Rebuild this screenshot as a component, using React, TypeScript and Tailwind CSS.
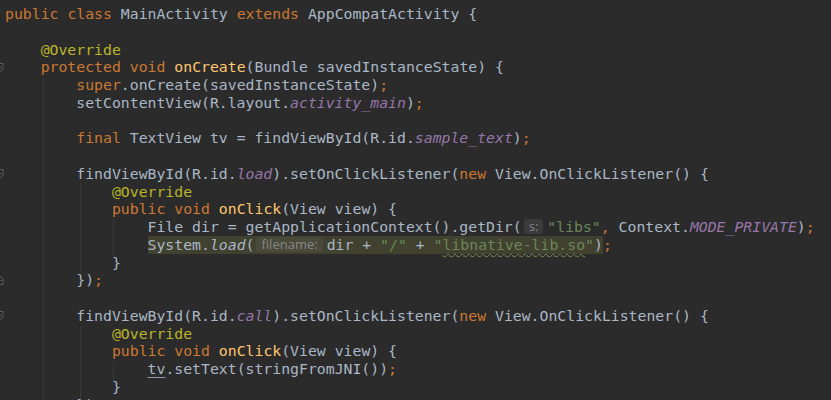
import React from 'react';

type Kind = 't' | 'k' | 'a' | 'm' | 'f' | 'i' | 's' | 'h' | 'u' | 'w';
type Tok = [Kind, string];

const kindClass: Record<Kind, string> = {
  t: 'text-[#a9b7c6]',
  k: 'text-[#cc7832]',
  a: 'text-[#bbb529]',
  m: 'text-[#ffc66d]',
  f: 'text-[#9876aa] italic',
  i: 'text-[#a9b7c6] italic',
  s: 'text-[#6a8759]',
  h: '',
  u: 'text-[#a9b7c6] underline underline-offset-[3px] decoration-[#9a93b8]',
  w: 'text-[#6a8759] underline decoration-wavy decoration-[#7f8f55] underline-offset-[3px] decoration-1',
};

const Hint = ({ label, dark }: { label: string; dark?: boolean }) => (
  <span
    className={`inline-block ml-[2px] mr-[4px] px-[5px] rounded-[3px] leading-[15px] text-[13px] text-[#878787] align-[1px] ${
      dark ? 'bg-[#4a4a3b]' : 'bg-[#3b3b3b]'
    }`}
    style={{ fontFamily: '"Open Sans", "Liberation Sans", sans-serif' }}
  >
    {label}
  </span>
);

const Toks = ({ toks, dark }: { toks: Tok[]; dark?: boolean }) => (
  <>
    {toks.map(([k, v], i) =>
      k === 'h' ? (
        <Hint key={i} label={v} dark={dark} />
      ) : (
        <span key={i} className={kindClass[k]}>
          {v}
        </span>
      ),
    )}
  </>
);

type Line = { toks: Tok[]; hl?: Tok[]; after?: Tok[]; fold?: 'open' | 'close' };

const lines: Line[] = [
  { toks: [['k', 'public'], ['t', ' '], ['k', 'class'], ['t', ' MainActivity '], ['k', 'extends'], ['t', ' AppCompatActivity {']] },
  { toks: [] },
  { toks: [['t', '    '], ['a', '@Override']] },
  {
    fold: 'open',
    toks: [['t', '    '], ['k', 'protected'], ['t', ' '], ['k', 'void'], ['t', ' '], ['m', 'onCreate'], ['t', '(Bundle savedInstanceState) {']],
  },
  { toks: [['t', '        '], ['k', 'super'], ['t', '.onCreate(savedInstanceState)'], ['k', ';']] },
  { toks: [['t', '        setContentView(R.layout.'], ['f', 'activity_main'], ['t', ')'], ['k', ';']] },
  { toks: [] },
  { toks: [['t', '        '], ['k', 'final'], ['t', ' TextView tv = findViewById(R.id.'], ['f', 'sample_text'], ['t', ')'], ['k', ';']] },
  { toks: [] },
  {
    fold: 'open',
    toks: [['t', '        findViewById(R.id.'], ['f', 'load'], ['t', ').setOnClickListener('], ['k', 'new'], ['t', ' View.OnClickListener() {']],
  },
  { toks: [['t', '            '], ['a', '@Override']] },
  { toks: [['t', '            '], ['k', 'public'], ['t', ' '], ['k', 'void'], ['t', ' '], ['m', 'onClick'], ['t', '(View view) {']] },
  {
    toks: [
      ['t', '                File dir = getApplicationContext().getDir('],
      ['h', 's:'],
      ['s', '"libs"'],
      ['k', ','],
      ['t', ' Context.'],
      ['f', 'MODE_PRIVATE'],
      ['t', ')'],
      ['k', ';'],
    ],
  },
  {
    toks: [['t', '                ']],
    hl: [['t', 'System.'], ['i', 'load'], ['t', '('], ['h', 'filename:'], ['t', 'dir + '], ['s', '"/"'], ['t', ' + '], ['s', '"'], ['w', 'libnative-lib.so'], ['s', '"'], ['t', ')']],
    after: [['k', ';']],
  },
  { toks: [['t', '            }']] },
  { fold: 'close', toks: [['t', '        })'], ['k', ';']] },
  { toks: [] },
  {
    fold: 'open',
    toks: [['t', '        findViewById(R.id.'], ['f', 'call'], ['t', ').setOnClickListener('], ['k', 'new'], ['t', ' View.OnClickListener() {']],
  },
  { toks: [['t', '            '], ['a', '@Override']] },
  { toks: [['t', '            '], ['k', 'public'], ['t', ' '], ['k', 'void'], ['t', ' '], ['m', 'onClick'], ['t', '(View view) {']] },
  { toks: [['t', '                '], ['u', 'tv'], ['t', '.setText(stringFromJNI())'], ['k', ';']] },
  { toks: [['t', '            }']] },
  { toks: [['t', '        })'], ['k', ';']] },
];

const FoldMark = ({ type }: { type: 'open' | 'close' }) => (
  <svg width="9" height="11" viewBox="0 0 9 11" className="-ml-[5px]">
    {type === 'open' ? (
      <path d="M1 1.5h7v5.5l-3.5 3.5L1 7z" fill="none" stroke="#5c5c5c" strokeWidth="1" />
    ) : (
      <path d="M1 9.5h7V4L4.5 0.5 1 4z" fill="none" stroke="#5c5c5c" strokeWidth="1" />
    )}
    <path d="M2.5 5.5h4" stroke="#5c5c5c" strokeWidth="1" />
  </svg>
);

// indent guides: [x, top, height]
const guides: [number, number, number][] = [
  [43, 78, 322],
  [80, 183, 89],
  [80, 326, 74],
  [113, 218, 38],
  [113, 362, 20],
];

export default function App() {
  return (
    <div
      className="relative w-[831px] h-[400px] overflow-hidden bg-[#2b2b2b] pt-[5px]"
      style={{ fontFamily: '"DejaVu Sans Mono", "Liberation Mono", monospace' }}
    >
      {guides.map(([x, top, h], i) => (
        <div key={i} className="absolute w-px bg-[#383838]" style={{ left: x, top, height: h }} />
      ))}
      {lines.map((ln, i) => (
        <div key={i} className="relative flex h-[17.76px] items-center text-[14.8px] leading-[17.76px] whitespace-pre">
          <div className="w-[5px] h-full flex items-center overflow-hidden shrink-0">
            {ln.fold && <FoldMark type={ln.fold} />}
          </div>
          <div className="flex items-center h-full">
            <Toks toks={ln.toks} />
            {ln.hl && (
              <span className="bg-[#41412f] h-full flex items-center">
                <Toks toks={ln.hl} dark />
              </span>
            )}
            {ln.after && <Toks toks={ln.after} />}
          </div>
        </div>
      ))}
    </div>
  );
}
